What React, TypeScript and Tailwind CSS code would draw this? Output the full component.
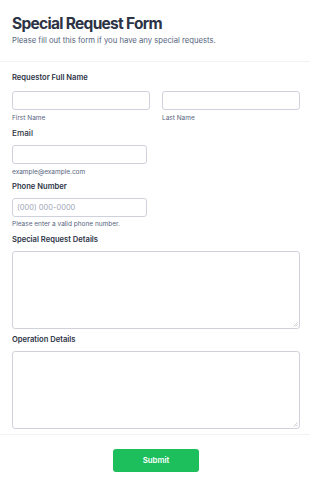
import React from 'react'

const Label = ({ children, weight = 'font-semibold' }: { children: React.ReactNode; weight?: string }) => (
  <div className={`text-[7.6px] leading-[12px] text-[#2c3345] ${weight}`}>{children}</div>
)

const Hint = ({ children }: { children: React.ReactNode }) => (
  <div className="text-[6.5px] leading-[9px] text-[#57647e]">{children}</div>
)

const inputCls =
  'block h-[19px] rounded-[3px] border border-[#cfd1dc] bg-white px-[4px] text-[7.5px] text-[#2c3345] outline-none placeholder:text-[#a0a6b6]'

const Area = () => (
  <div className="relative mt-[5px]">
    <textarea className="block h-[78px] w-full resize-none rounded-[3px] border border-[#cfd1dc] bg-white outline-none" />
    <svg className="absolute right-[2px] bottom-[2px]" width="5" height="5" viewBox="0 0 5 5">
      <path d="M4.5 0.5 L0.5 4.5 M4.5 2.5 L2.5 4.5" stroke="#b8bcc8" strokeWidth="0.7" />
    </svg>
  </div>
)

export default function App() {
  return (
    <div className="min-h-[487px] w-[310px] bg-white font-['Inter',sans-serif]">
      <div className="border-b border-[#f3f3f6] pl-3 pr-[10px] pt-[12px] pb-[14px]">
        <h1 className="text-[15.5px] font-bold leading-[24px] tracking-[-0.7px] text-[#2c3345]">
          Special Request Form
        </h1>
        <p className="-mt-[1px] text-[7.7px] leading-[12px] text-[#57647e]">
          Please fill out this form if you have any special requests.
        </p>
      </div>

      <div className="border-b border-[#f3f3f6] pl-3 pr-[10px] pt-[10px] pb-[5px]">
        <Label>Requestor Full Name</Label>
        <div className="mt-[7px] flex gap-3">
          <div className="flex-1">
            <input className={`${inputCls} w-full`} />
            <div className="mt-[4px]">
              <Hint>First Name</Hint>
            </div>
          </div>
          <div className="flex-1">
            <input className={`${inputCls} w-full`} />
            <div className="mt-[4px]">
              <Hint>Last Name</Hint>
            </div>
          </div>
        </div>

        <div className="mt-[4px]">
          <div className="text-[8.2px] leading-[12px] font-medium text-[#2c3345]">Email</div>
        </div>
        <input className={`${inputCls} mt-[6px] w-[135px]`} />
        <div className="mt-[4px]">
          <Hint>example@example.com</Hint>
        </div>

        <div className="mt-[4px]">
          <Label>Phone Number</Label>
        </div>
        <input className={`${inputCls} mt-[5px] w-[135px]`} placeholder="(000) 000-0000" />
        <div className="mt-[3px]">
          <Hint>Please enter a valid phone number.</Hint>
        </div>

        <div className="mt-[5px]">
          <Label>Special Request Details</Label>
        </div>
        <Area />

        <div className="mt-[5px]">
          <Label>Operation Details</Label>
        </div>
        <Area />
      </div>

      <div className="flex justify-center pt-[14px]">
        <button className="ml-[2px] h-[23px] w-[86px] rounded-[3px] bg-[#1dbf5c] text-[7.8px] font-semibold text-white">
          Submit
        </button>
      </div>
    </div>
  )
}
